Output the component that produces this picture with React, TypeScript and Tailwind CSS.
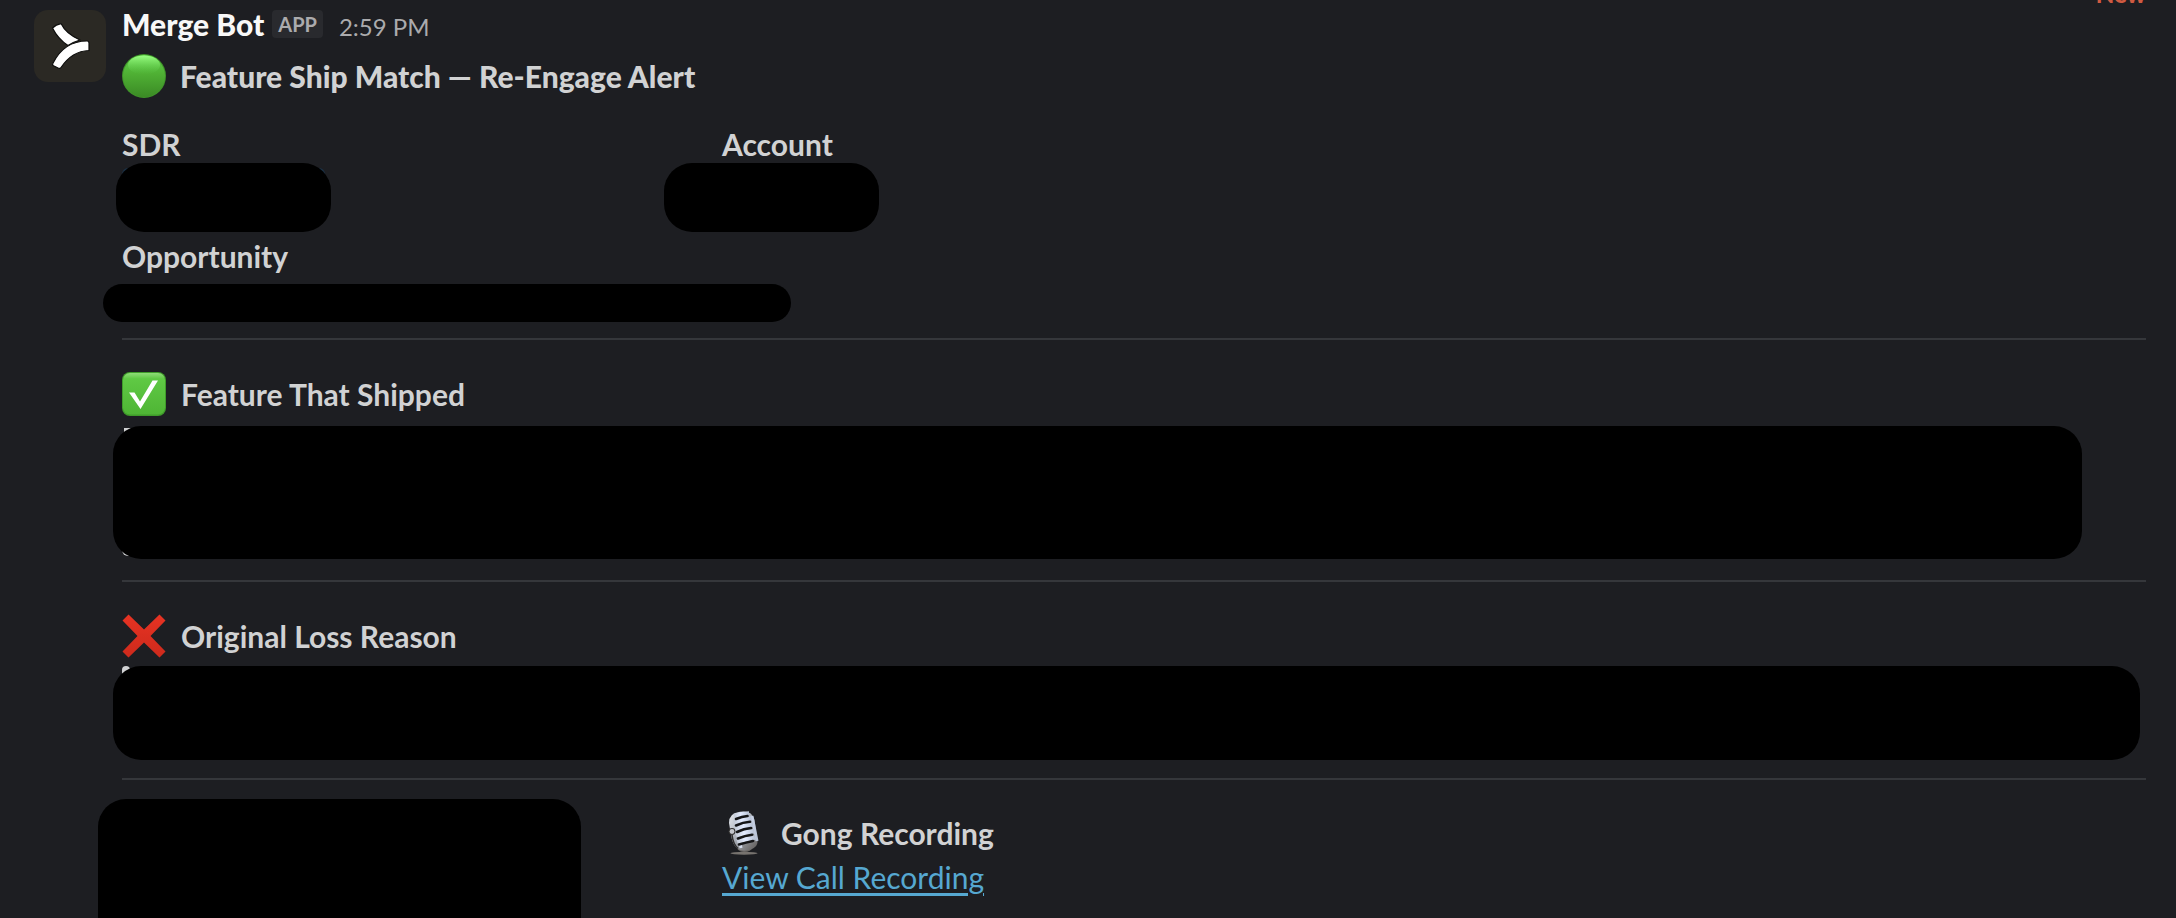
import type { ReactNode } from "react";

function Logo() {
  return (
    <svg viewBox="0 0 72 72" className="size-18 shrink-0" role="img" aria-label="Merge Bot">
      <rect width="72" height="72" rx="14" fill="#2b2924" />
      <g fill="#fff" stroke="#0c0c0b" strokeWidth="1.2" strokeLinejoin="round">
        <path d="M18.500 18 Q22 14.500 27 13.600 Q32 24 46 30 Q39 32 34 35.500 Q24 29 18.500 18Z" />
        <path d="M53 31 Q55 31 55 33 V40.500 Q38 41 27 57.500 Q26 59 24.500 58.200 L19.500 55.800 Q18 55 18.800 53.500 Q30 31 53 31Z" />
      </g>
    </svg>
  );
}

function GreenCircle() {
  return (
    <svg viewBox="0 0 44 44" className="size-11 shrink-0" aria-hidden="true">
      <defs>
        <linearGradient id="circleFill" x1="0" y1="0" x2="0" y2="1">
          <stop offset="0" stopColor="#5fd04a" />
          <stop offset="0.45" stopColor="#4fb034" />
          <stop offset="1" stopColor="#3b8a25" />
        </linearGradient>
        <linearGradient id="circleShine" x1="0" y1="0" x2="0" y2="1">
          <stop offset="0" stopColor="#9bff84" />
          <stop offset="1" stopColor="#5ac544" stopOpacity="0" />
        </linearGradient>
      </defs>
      <circle cx="22" cy="22" r="22" fill="#3f9429" />
      <circle cx="22" cy="22" r="21" fill="url(#circleFill)" />
      <ellipse cx="22" cy="11" rx="16" ry="9.500" fill="url(#circleShine)" />
    </svg>
  );
}

function CheckMark() {
  return (
    <svg viewBox="0 0 44 44" className="size-11 shrink-0" aria-hidden="true">
      <defs>
        <linearGradient id="checkFill" x1="0" y1="0" x2="0" y2="1">
          <stop offset="0" stopColor="#8fdc78" />
          <stop offset="0.14" stopColor="#5fc944" />
          <stop offset="1" stopColor="#4fb535" />
        </linearGradient>
      </defs>
      <rect width="44" height="44" rx="8" fill="#3f9c2a" />
      <rect x="1" y="1" width="42" height="41.500" rx="7" fill="url(#checkFill)" />
      <path d="M7 20.500 H12.500 L18 29.500 L30.500 8.500 H36 L18.500 37Z" fill="#fff" />
    </svg>
  );
}

function CrossMark() {
  return (
    <svg viewBox="0 0 44 44" className="size-11 shrink-0" aria-hidden="true">
      <defs>
        <linearGradient id="crossFill" x1="0" y1="0" x2="0" y2="1">
          <stop offset="0" stopColor="#e73323" />
          <stop offset="1" stopColor="#cd2a1c" />
        </linearGradient>
      </defs>
      <path
        d="M6.500 0.500 L22 15.500 L37.500 0.500 L43.500 6.500 L28.500 22 L43.500 37.500 L37.500 43.500 L22 28.500 L6.500 43.500 L0.500 37.500 L15.500 22 L0.500 6.500Z"
        fill="url(#crossFill)"
      />
    </svg>
  );
}

function Microphone() {
  return (
    <svg viewBox="0 0 44 44" className="size-11 shrink-0" aria-hidden="true">
      <defs>
        <linearGradient id="micBody" x1="0" y1="0" x2="1" y2="1">
          <stop offset="0" stopColor="#e8ecf2" />
          <stop offset="0.5" stopColor="#a3a8b1" />
          <stop offset="1" stopColor="#5c5855" />
        </linearGradient>
        <linearGradient id="micBar" x1="0" y1="0" x2="1" y2="0">
          <stop offset="0" stopColor="#c3cad6" />
          <stop offset="0.45" stopColor="#e2ebff" />
          <stop offset="1" stopColor="#b7c1d4" />
        </linearGradient>
      </defs>
      <ellipse cx="22" cy="42.300" rx="13.500" ry="1.500" fill="#77736f" />
      <path d="M14 34 L31 36 Q29 41 22 41 Q15 41 14 34Z" fill="#6b6764" />
      <path
        d="M7 12 Q7 2 18 0.800 Q30 -1 32.500 9 L35.500 30 Q36 36 29 38.500 Q18 42 13 35 Q10 31 9 24Z"
        fill="url(#micBody)"
      />
      <path
        d="M13 9 L19 37 M30 5 L35 30"
        stroke="url(#micBar)"
        strokeWidth="3"
        fill="none"
      />
      <g stroke="url(#micBar)" strokeWidth="4.500" fill="none">
        <path d="M12 5 Q20 2.500 27 2.500" />
        <path d="M12 11.500 Q20 8.500 29.500 7.500" />
        <path d="M13 18 Q21 14.500 31 13.800" />
        <path d="M14 24.500 Q22 21 32 20.200" />
        <path d="M15 30.500 Q23 28 33 26.600" />
      </g>
      <g stroke="#141517" strokeWidth="2.600" strokeLinecap="round" fill="none">
        <path d="M14 8 Q20 5.500 25.500 5" />
        <path d="M14 14.500 Q21 11.200 28 10.800" />
        <path d="M15 21 Q22 17.500 29 17" />
        <path d="M16 27.500 Q23 24.500 30 23.700" />
        <path d="M17 33.500 Q24 31.500 31 30" />
      </g>
      <path d="M10 24 Q11 33 16 37.500" stroke="#2e2d2d" strokeWidth="1.600" fill="none" />
      <circle cx="10" cy="20.500" r="3.400" fill="#31302f" />
      <circle cx="10" cy="20.500" r="2.400" fill="#c3c6cc" />
    </svg>
  );
}

/* Black cover; children are the slivers of content left showing round its corners. */
function Redacted({ className, shape, children }: { className: string; shape: string; children?: ReactNode }) {
  return (
    <div className={`relative ${className}`}>
      {children}
      <div className={`relative size-full bg-black ${shape}`} role="img" aria-label="Redacted" />
    </div>
  );
}

function Heading({ icon, children }: { icon: ReactNode; children: ReactNode }) {
  return (
    <h3 className="flex h-11 items-center gap-[15px] font-bold">
      {icon}
      <span>{children}</span>
    </h3>
  );
}

export default function App() {
  return (
    <main className="relative h-screen overflow-hidden bg-[#1d1e22] pr-[30px] pl-[34px] font-['Lato',sans-serif] text-[30px] leading-[44px] text-[#d1d2d3]">
      <span className="absolute -top-[28px] right-[30px] text-[24px] font-black text-[#cf5a41]">New</span>
      <article className="flex items-start gap-4 pt-[10px]">
        <Logo />
        <div className="min-w-0 flex-1">
          <header className="-mt-2 flex h-11 items-baseline gap-2">
            <h1 className="font-black text-[#f8f8f8]">Merge Bot</h1>
            <span className="self-center rounded bg-[#292a2e] px-1.5 text-[20px] leading-[28px] font-bold text-[#ababad]">
              APP
            </span>
            <time className="pl-2 text-[24px] text-[#ababad]">2:59 PM</time>
          </header>

          <h2 className="mt-2 flex h-11 items-center gap-3.5 font-black">
            <GreenCircle />
            <span>Feature Ship Match — Re-Engage Alert</span>
          </h2>

          <section className="mt-6 grid grid-cols-[600px_1fr]">
            <div>
              <h3 className="font-bold">SDR</h3>
              <Redacted className="-mt-[3px] mb-0.5 -ml-1.5 h-[69px] w-[215px]" shape="rounded-[28px]">
                <span className="absolute inset-x-1.5 top-[5px] h-9 rounded-md bg-[#1b3146]" />
              </Redacted>
            </div>
            <div>
              <h3 className="font-bold">Account</h3>
              <Redacted className="-mt-[3px] mb-0.5 -ml-[58px] h-[69px] w-[215px]" shape="rounded-[28px]" />
            </div>
            <div>
              <h3 className="font-bold">Opportunity</h3>
              <Redacted className="mt-1.5 -ml-[19px] h-[38px] w-[688px]" shape="rounded-full" />
            </div>
          </section>

          <hr className="mt-4 border-t-2 border-[#35373b]" />

          <section className="mt-8">
            <Heading icon={<CheckMark />}>Feature That Shipped</Heading>
            <Redacted className="mt-2.5 mr-16 -ml-[9px] h-[133px]" shape="rounded-[28px]">
              <span className="absolute top-0.5 left-[11px] h-1 w-3 bg-[#d1d2d3]" />
              <span className="absolute bottom-[3px] left-[9px] h-2 w-3 rounded-bl-md bg-[#d1d2d3]" />
            </Redacted>
          </section>

          <hr className="mt-[21px] border-t-2 border-[#35373b]" />

          <section className="mt-8">
            <Heading icon={<CrossMark />}>Original Loss Reason</Heading>
            <Redacted className="mt-2 mr-1.5 -ml-[9px] h-[94px]" shape="rounded-[28px]">
              <span className="absolute top-0 left-[9px] size-2 rounded-t-full bg-[#d1d2d3]" />
            </Redacted>
          </section>

          <hr className="mt-[18px] border-t-2 border-[#35373b]" />

          <section className="mt-[19px] grid grid-cols-[600px_1fr]">
            <Redacted className="-ml-6 h-[160px] w-[483px]" shape="rounded-[28px]" />
            <div className="pt-3">
              <Heading icon={<Microphone />}>Gong Recording</Heading>
              <a
                href="#call-recording"
                className="text-[#56a8d1] underline decoration-[3px] underline-offset-4"
              >
                View Call Recording
              </a>
            </div>
          </section>
        </div>
      </article>
    </main>
  );
}
